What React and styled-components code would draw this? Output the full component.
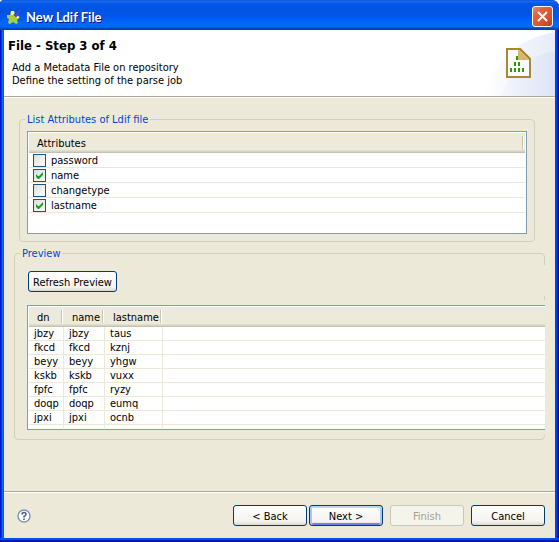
import React from "react";
import styled, { createGlobalStyle, css } from "styled-components";

const Global = createGlobalStyle`
  * { box-sizing: border-box; }
  body {
    margin: 0;
    background: #fff;
    color: #000;
    font: 11px/13px "DejaVu Sans Condensed", "DejaVu Sans", sans-serif;
  }
  button, input { font: inherit; }
`;

const Window = styled.div`
  min-height: 100vh;
  display: flex;
  flex-direction: column;
  background: linear-gradient(90deg, #0019cf 0 1px, #0831d9 1px 2px, #166aee 2px 3px, #0855dd 3px calc(100% - 4px), #0040ee calc(100% - 4px) calc(100% - 2px), #001dc0 calc(100% - 2px) calc(100% - 1px), #00138c calc(100% - 1px));
  border-radius: 4px 7px 0 0;
  overflow: hidden;
`;

const TitleBar = styled.header`
  height: 30px;
  display: flex;
  align-items: center;
  gap: 5px;
  padding: 3px 6px 0 7px;
  background: linear-gradient(#0048d0 0, #1c6cf0 1px, #1466ee 2px, #0a5ce8 3px, #0058e6 4px, #0054e3 8px, #0054e3 12px, #0055eb 15px, #005bf5 19px, #026afe 24px, #0062ef 27px, #0052d6 28px, #0040ab 29px);
`;

const WindowTitle = styled.h1`
  flex: 1;
  margin: 0;
  font: bold 13px/16px Lato, "Open Sans", sans-serif;
  color: #fff;
  text-shadow: 1px 1px #0f1089;
`;

const CloseButton = styled.button`
  width: 21px;
  height: 21px;
  padding: 0;
  display: grid;
  place-items: center;
  border: 1px solid #fff;
  border-radius: 3px;
  background: linear-gradient(135deg, #e88a70, #e2613d 30%, #dc4f2b 70%, #b5401f);
`;

const Client = styled.main`
  flex: 1;
  display: flex;
  flex-direction: column;
  margin: 0 4px;
  background: #ece9d8;
`;

const BottomEdge = styled.div`
  height: 4px;
  background: linear-gradient(#0050ee 0 2px, #001dc0 2px 3px, #00138c 3px);
`;

const Banner = styled.section`
  height: 68px;
  display: flex;
  justify-content: space-between;
  background: #fff;
  border-bottom: 1px solid #fff;
  box-shadow: inset 0 -1px #aca899;
`;

const BannerText = styled.div`
  padding: 8px 0 0 4px;
`;

const StepTitle = styled.h2`
  margin: 0;
  font-size: 13px;
  line-height: 16px;
`;

const Description = styled.p`
  margin: 7px 0 0 4px;
`;

const BannerArt = styled.svg`
  width: 80px;
  height: 66px;
`;

const Groups = styled.div`
  flex: 1;
  padding: 15px 10px 8px;
`;

const Group = styled.fieldset`
  min-width: 0;
  margin: ${(p) => (p.$inset ? "0 10px 0 5px" : "5px 0 0")};
  padding: 0;
  border: 1px solid #d0d0bf;
  border-radius: 4px;
`;

const GroupTitle = styled.legend`
  margin-left: 5px;
  padding: 0 2px;
  line-height: 13px;
  color: #0046d5;
`;

const ListFrame = styled.div`
  height: ${(p) => (p.$open ? "125px" : "103px")};
  margin: ${(p) => (p.$open ? "0 0 0 12px" : "5px 7px 7px")};
  padding: ${(p) => (p.$open ? "1px 0 1px 1px" : "1px")};
  border: 1px solid #7f9db9;
  ${(p) => p.$open && css`border-right: 0;`}
  background: #fff;
  overflow: hidden;
`;

const TableClip = styled.div`
  height: 100%;
  overflow: hidden;
`;

const Table = styled.table`
  width: 100%;
  table-layout: fixed;
  border-collapse: separate;
  border-spacing: 0;
`;

const Col = styled.col`
  width: ${(p) => p.$width};
`;

const HeadCell = styled.th`
  height: 20px;
  padding: 2px 0 0 8px;
  text-align: left;
  font-weight: normal;
  white-space: nowrap;
  border-bottom: 1px solid #c6c2b0;
  background:
    ${(p) => (p.$last ? "" : "linear-gradient(90deg, #c7c5b2 1px, #fff 1px) calc(100% - 1px) 3px / 2px 13px no-repeat,")}
    linear-gradient(#ebeadb 17px, #e2decd 17px 18px, #d6d2c2 18px);
`;

const Cell = styled.td`
  height: ${(p) => (p.$tall ? "15px" : "14px")};
  padding: ${(p) => (p.$tall ? "0 0 0 4px" : "1px 0 0 5px")};
  line-height: 12px;
  white-space: nowrap;
  border-bottom: 1px solid #ece9d8;
  ${(p) => p.$divided && css`border-right: 1px solid #ece9d8;`}
`;

const CheckLabel = styled.label`
  display: flex;
  align-items: center;
  gap: 5px;
  height: 14px;
  line-height: 14px;
`;

const CheckText = styled.span`
  padding-top: 2px;
`;

const CheckFrame = styled.span`
  display: grid;
  place-items: center;
  > * { grid-area: 1 / 1; }
`;

const CheckInput = styled.input`
  appearance: none;
  width: 13px;
  height: 13px;
  margin: 0;
  border: 1px solid #1c5180;
  background: linear-gradient(135deg, #dcdcd7, #fff);
`;

const CheckMark = styled.svg`
  width: 7px;
  height: 7px;
  pointer-events: none;
`;

const PreviewActions = styled.div`
  height: 31px;
  margin: 5px -1px 0 0;
  padding: 6px 13px 4px;
  background: #ece9d8;
`;

const PreviewBody = styled.div`
  margin: 4px -1px 4px 0;
  padding: 5px 0;
  background: #ece9d8;
`;

const Button = styled.button`
  height: 21px;
  min-width: ${(p) => (p.$fit ? "0" : "74px")};
  padding: 2px 4px 0;
  line-height: 17px;
  white-space: nowrap;
  color: #000;
  border: 1px solid #003c74;
  border-radius: 3px;
  background: linear-gradient(#fff, #f4f3ee 80%, #dcd8cd);
  ${(p) => p.$primary && css`
    box-shadow: inset 0 2px #bcd4f6, inset 2px 0 #a9c5f3, inset -2px 0 #a9c5f3, inset 0 -2px #6982ee;
  `}
  &:disabled {
    color: #a1a192;
    border-color: #c9c7ba;
    background: #f5f4ea;
  }
`;

const Footer = styled.footer`
  display: flex;
  align-items: center;
  padding: 13px 10px 12px 13px;
  border-top: 1px solid #aca899;
  box-shadow: inset 0 1px #fff;
`;

const HelpButton = styled.button`
  display: grid;
  padding: 0;
  margin-right: auto;
  border: 0;
  background: none;
`;

const ButtonRow = styled.div`
  display: flex;
  gap: 7px;
`;

const Pair = styled.div`
  display: flex;
  gap: 2px;
`;

const attributes = [
  { name: "password", checked: false },
  { name: "name", checked: true },
  { name: "changetype", checked: false },
  { name: "lastname", checked: true },
];

const preview = [
  ["jbzy", "jbzy", "taus"],
  ["fkcd", "fkcd", "kznj"],
  ["beyy", "beyy", "yhgw"],
  ["kskb", "kskb", "vuxx"],
  ["fpfc", "fpfc", "ryzy"],
  ["doqp", "doqp", "eumq"],
  ["jpxi", "jpxi", "ocnb"],
  ["", "", ""],
];

function AttributeRow({ name, checked }) {
  const [on, setOn] = React.useState(checked);
  return (
    <tr>
      <Cell $tall>
        <CheckLabel>
          <CheckFrame>
            <CheckInput type="checkbox" checked={on} onChange={() => setOn(!on)} />
            {on && (
              <CheckMark viewBox="0 0 7 7" aria-hidden="true">
                <path d="M0 2v3l2 2h1l4-4V0L3 4H2z" fill="#21a121" />
              </CheckMark>
            )}
          </CheckFrame>
          <CheckText>{name}</CheckText>
        </CheckLabel>
      </Cell>
    </tr>
  );
}

export default function App() {
  return (
    <Window>
      <Global />
      <TitleBar>
        <svg width="14" height="16" viewBox="0 0 14 16" aria-hidden="true">
          <path d="M4 2h3l1 4 4 1v2l-2 2 1 3-2 1-3-2-3 2-2-1 1-4-2-1V6h3z" fill="#a9cf3a" />
          <path d="M4 2h3l1 4H4zM9 7l4 1-3 2z" fill="#f3f3a0" />
          <path d="M7 5l2 2 4-6" fill="none" stroke="#4b46d8" strokeWidth="2" />
        </svg>
        <WindowTitle>New Ldif File</WindowTitle>
        <CloseButton aria-label="Close">
          <svg width="13" height="13" viewBox="0 0 13 13" aria-hidden="true">
            <path d="M2 2l9 9M11 2l-9 9" stroke="#fff" strokeWidth="2" />
          </svg>
        </CloseButton>
      </TitleBar>
      <Client>
        <Banner>
          <BannerText>
            <StepTitle>File - Step 3 of 4</StepTitle>
            <Description>
              Add a Metadata File on repository
              <br />
              Define the setting of the parse job
            </Description>
          </BannerText>
          <BannerArt viewBox="0 0 80 66" aria-hidden="true">
            <defs>
              <linearGradient id="sweep">
                <stop offset="0" stopColor="#fff" />
                <stop offset="1" stopColor="#e6ebf8" />
              </linearGradient>
              <linearGradient id="sweepInner">
                <stop offset="0" stopColor="#f4f6fc" />
                <stop offset="1" stopColor="#dce4f5" />
              </linearGradient>
            </defs>
            <path d="M8 66Q24 12 80 2V66z" fill="url(#sweep)" />
            <path d="M26 66Q40 28 80 21V66z" fill="url(#sweepInner)" />
            <path d="M32 19h13l10 10v18H32z" fill="#f8faff" stroke="#a98631" strokeWidth="2" />
            <path d="M43 19l11 11H43z" fill="#d6b56c" />
            <path d="M32 19h13l10 10v18H32z" fill="none" stroke="#a98631" strokeWidth="2" />
            <path d="M41 26h2v4h-2zM39 32h2v4h-2zM43 32h2v4h-2zM35 38h2v4h-2zM39 38h2v4h-2zM43 38h2v4h-2zM47 38h2v4h-2z" fill="#2f9a00" />
          </BannerArt>
        </Banner>
        <Groups>
          <Group $inset>
            <GroupTitle>List Attributes of Ldif file</GroupTitle>
            <ListFrame>
              <Table>
                <thead>
                  <tr><HeadCell scope="col">Attributes</HeadCell></tr>
                </thead>
                <tbody>
                  {attributes.map((a) => <AttributeRow key={a.name} {...a} />)}
                </tbody>
              </Table>
            </ListFrame>
          </Group>
          <Group>
            <GroupTitle>Preview</GroupTitle>
            <PreviewActions>
              <Button type="button" $fit>Refresh Preview</Button>
            </PreviewActions>
            <PreviewBody>
              <ListFrame $open>
                <TableClip>
                  <Table>
                    <colgroup>
                      <Col $width="35px" />
                      <Col $width="41px" />
                      <Col $width="58px" />
                      <Col $width="auto" />
                    </colgroup>
                    <thead>
                      <tr>
                        <HeadCell scope="col">dn</HeadCell>
                        <HeadCell scope="col">name</HeadCell>
                        <HeadCell scope="col">lastname</HeadCell>
                        <HeadCell $last />
                      </tr>
                    </thead>
                    <tbody>
                      {preview.map((row, r) => (
                        <tr key={r}>
                          {row.map((value, i) => <Cell key={i} $divided>{value}</Cell>)}
                          <Cell />
                        </tr>
                      ))}
                    </tbody>
                  </Table>
                </TableClip>
              </ListFrame>
            </PreviewBody>
          </Group>
        </Groups>
        <Footer>
          <HelpButton aria-label="Help">
            <svg width="14" height="14" viewBox="0 0 14 14" aria-hidden="true">
              <circle cx="7" cy="7" r="6" fill="#fff" stroke="#8094b4" strokeWidth="1.4" />
              <path d="M5 5.5Q5 3.5 7 3.5T9 5.3Q9 6.4 7 7.4V8.4M7 9.6V11" fill="none" stroke="#4a6191" strokeWidth="1.6" />
            </svg>
          </HelpButton>
          <ButtonRow>
            <Pair>
              <Button type="button">&lt; Back</Button>
              <Button type="button" $primary>Next &gt;</Button>
            </Pair>
            <Button type="button" disabled>Finish</Button>
            <Button type="button">Cancel</Button>
          </ButtonRow>
        </Footer>
      </Client>
      <BottomEdge />
    </Window>
  );
}
